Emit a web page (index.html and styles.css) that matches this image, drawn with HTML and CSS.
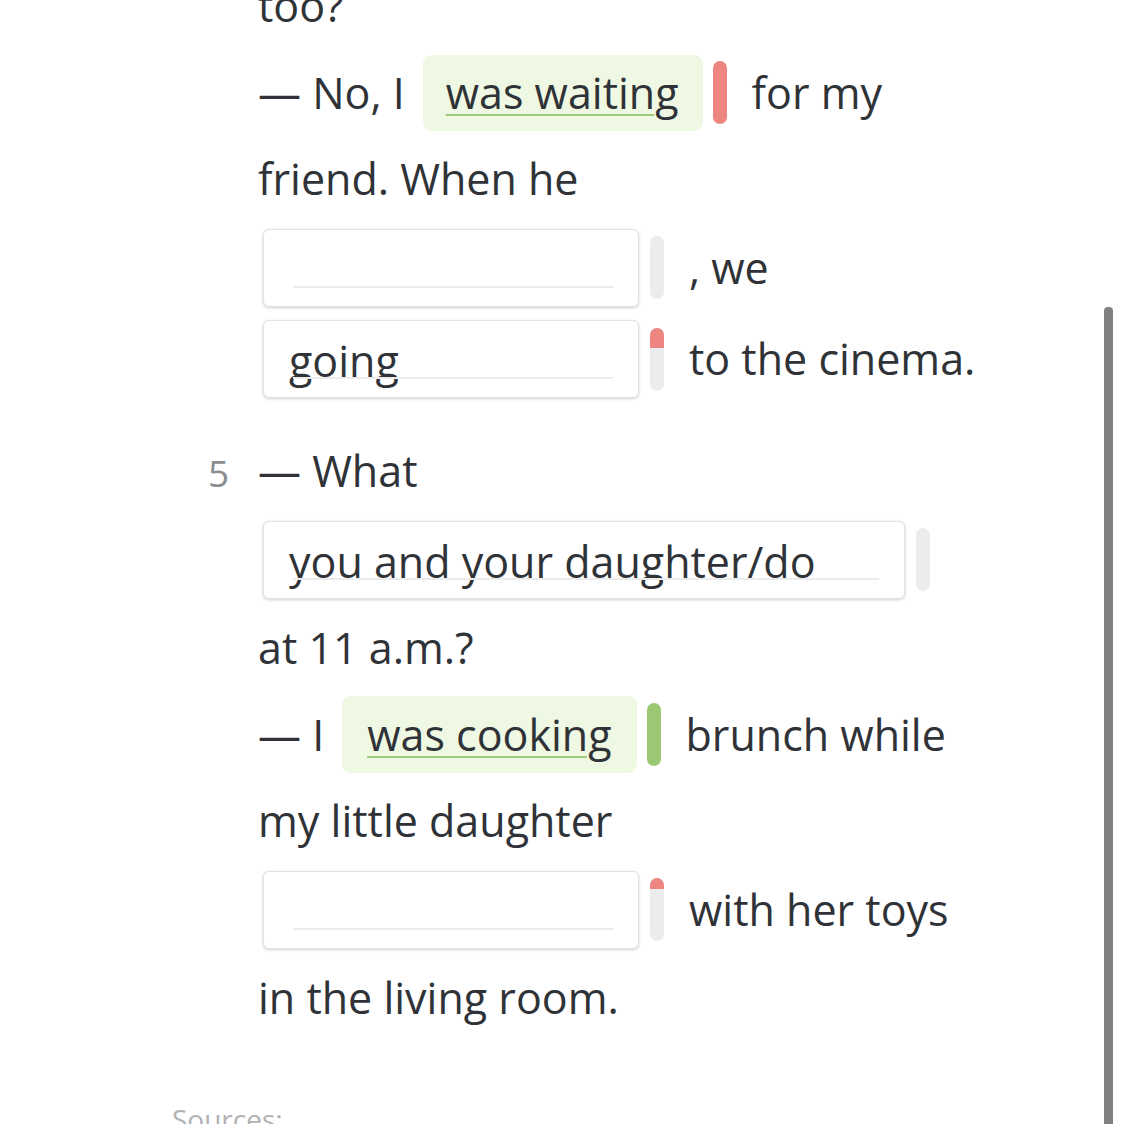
FILE: index.html
```html
<!DOCTYPE html>
<html>
<head>
<meta charset="utf-8">
<link rel="stylesheet" href="styles.css">
</head>
<body>
<div class="page">
  <div class="task">
    <div class="num"></div>
    <div class="content">
      <div class="row text-row first"><span>too?</span></div>
      <div class="row chip-row">
        <span>— No, I</span>
        <span class="chip">was waiting</span>
        <span class="bar bar-red"></span>
        <span class="after">for my</span>
      </div>
      <div class="row text-row"><span>friend. When he</span></div>
      <div class="row input-row">
        <span class="field field-short"><span class="line"></span></span>
        <span class="bar"></span>
        <span class="after">, we</span>
      </div>
      <div class="row input-row second">
        <span class="field field-short"><span class="val">going</span><span class="line"></span></span>
        <span class="bar"><span class="fill fill-big"></span></span>
        <span class="after">to the cinema.</span>
      </div>
    </div>
  </div>

  <div class="task task-gap">
    <div class="num">5</div>
    <div class="content">
      <div class="row text-row"><span>— What</span></div>
      <div class="row input-row">
        <span class="field field-long"><span class="val">you and your daughter/do</span><span class="line"></span></span>
        <span class="bar"></span>
      </div>
      <div class="row text-row"><span>at 11 a.m.?</span></div>
      <div class="row chip-row">
        <span>— I</span>
        <span class="chip chip-b">was cooking</span>
        <span class="bar bar-green"></span>
        <span class="after">brunch while</span>
      </div>
      <div class="row text-row"><span>my little daughter</span></div>
      <div class="row input-row">
        <span class="field field-short"><span class="line"></span></span>
        <span class="bar"><span class="fill fill-small"></span></span>
        <span class="after">with her toys</span>
      </div>
      <div class="row text-row"><span>in the living room.</span></div>
    </div>
  </div>

  <div class="sources">Sources:</div>
</div>
<div class="scrollbar"></div>
</body>
</html>
```

FILE: styles.css
```css
html, body {
  margin: 0;
  padding: 0;
  background: #ffffff;
  overflow: hidden;
  height: 1124px;
}
body {
  font-family: "Open Sans", "Noto Sans", sans-serif;
  color: #2f3338;
  font-size: 43px;
  position: relative;
}
.page {
  padding-left: 208px;
  margin-top: -38px;
}
.task {
  display: flex;
  align-items: flex-start;
}
.task-gap {
  margin-top: 23px;
}
.num {
  width: 50px;
  flex: none;
  color: #8a8d90;
  font-size: 37px;
  height: 88px;
  line-height: 88px;
  padding-top: 2px;
  box-sizing: border-box;
}
.content {
  width: 724px;
}
.row {
  display: flex;
  align-items: center;
  white-space: nowrap;
  line-height: 60px;
}
.text-row {
  height: 88px;
}
.chip-row {
  height: 85px;
}
.input-row {
  height: 89px;
}
.input-row.second {
  height: 92px;
  padding-top: 2px;
  box-sizing: border-box;
}
.chip {
  margin-left: 18px;
  background: #eef8e2;
  border-radius: 9px;
  height: 76px;
  box-sizing: border-box;
  padding: 0 24px 0 23px;
  display: flex;
  align-items: center;
  text-decoration: underline;
  text-decoration-color: #9fcb78;
  text-decoration-thickness: 2px;
  text-underline-offset: 5px;
}
.chip-b {
  height: 77px;
  padding: 0 25px 0 25px;
}
.bar {
  width: 14px;
  height: 63px;
  border-radius: 7px;
  background: #ececee;
  margin-left: 11px;
  flex: none;
  overflow: hidden;
  display: flex;
  flex-direction: column;
}
.chip-row .bar {
  margin-left: 10px;
}
.bar-red {
  background: #ee8580;
}
.bar-green {
  background: #9cc873;
}
.fill {
  background: #ee8580;
  width: 100%;
  display: block;
}
.fill-big {
  height: 20px;
}
.fill-small {
  height: 11px;
}
.after {
  margin-left: 25px;
}
.field {
  margin-left: 5px;
  height: 78px;
  box-sizing: border-box;
  border: 1px solid #e2e2df;
  border-radius: 6px;
  box-shadow: 0 1px 3px rgba(0, 0, 0, 0.18);
  background: #ffffff;
  position: relative;
  display: flex;
  align-items: center;
  padding-left: 25px;
  flex: none;
}
.field-short {
  width: 376px;
}
.field-long {
  width: 642px;
}
.val {
  padding-top: 4px;
}
.line {
  position: absolute;
  left: 29px;
  right: 25px;
  bottom: 18px;
  height: 2px;
  background: #ececec;
}
.sources {
  margin-top: 58px;
  margin-left: -36px;
  font-size: 28px;
  color: #b0b2b4;
  line-height: 38px;
}
.scrollbar {
  position: absolute;
  left: 1104px;
  top: 307px;
  width: 9px;
  height: 830px;
  background: #808080;
  border-radius: 4px 4px 0 0;
}
```
